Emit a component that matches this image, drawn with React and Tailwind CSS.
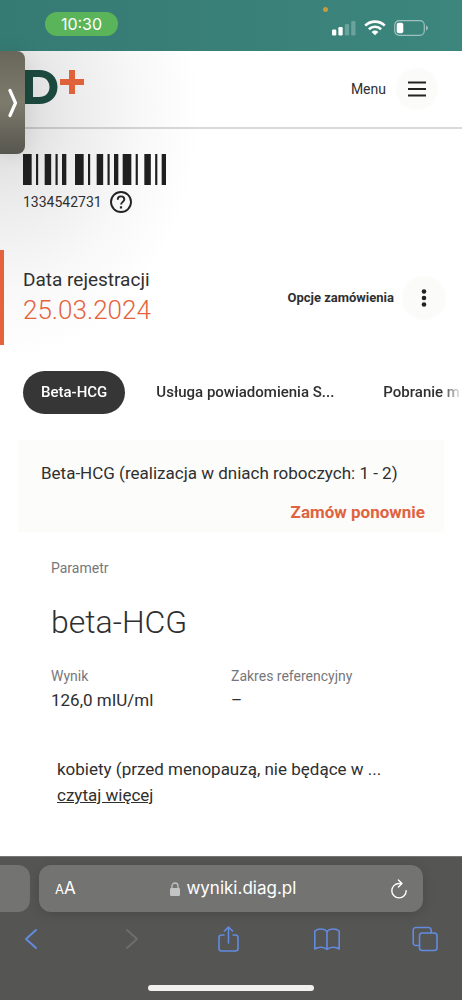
import { useState } from "react";
import clsx from "clsx";

/* ======================================================
   LAB RESULTS - order details inside a mobile browser
====================================================== */

// [offset, width] of every bar, in modules
const BARS = [
  [0, 4], [6, 1], [10, 3], [15, 1], [18, 2], [24, 4], [30, 1], [34, 3],
  [39, 1], [42, 2], [46, 4], [52, 1], [56, 3], [61, 1], [64, 2],
];

const TABS = ["Beta-HCG", "Usługa powiadomienia S...", "Pobranie m"];

export default function App() {
  return (
    <div className="relative flex min-h-screen flex-col overflow-hidden bg-white font-['Roboto','Noto_Sans',sans-serif] text-[#2f2f30]">
      <StatusBar />

      <div className="flex flex-1 flex-col bg-[radial-gradient(ellipse_200px_250px_at_0px_60px,#d6d6d6,#ebebeb_35%,#f8f8f8_70%,#ffffff)]">
        <Header />
        <main className="flex-1">
          <OrderCode />
          <OrderSummary />
          <TestTabs />
          <OrderItem />
          <Result />
        </main>
      </div>

      <BrowserBar />
      <DrawerHandle />
    </div>
  );
}

/* ================= STATUS BAR ================= */

function StatusBar() {
  return (
    <div className="relative flex h-[51px] items-center justify-between bg-linear-to-r from-[#367a74] to-[#3c867d] pr-[34px] pl-[45px]">
      <span className="mb-1 flex h-6 w-[73px] items-center justify-center rounded-full bg-[#5ab55a] font-['Inter',sans-serif] text-base text-white">
        10:30
      </span>
      <span className="absolute top-[7px] left-[70%] size-[5px] rounded-full bg-[#c79a3e]" />
      <div className="mt-1 flex items-center gap-2 text-white">
        <svg width="24" height="16" viewBox="0 0 24 16" fill="currentColor">
          <rect x="0" y="9.500" width="4.300" height="6" rx="1.200" />
          <rect x="6.400" y="7" width="4.300" height="8.500" rx="1.200" />
          <rect x="12.800" y="4" width="4.300" height="11.500" rx="1.200" opacity="0.25" />
          <rect x="19.200" y="1" width="4.300" height="14.500" rx="1.200" opacity="0.25" />
        </svg>
        <svg width="22" height="16" viewBox="0 0 22 16" fill="none" stroke="currentColor" strokeWidth="2.600">
          <path d="M1.200 5.600a14 14 0 0 1 19.600 0" />
          <path d="M4.900 9.200a8.700 8.700 0 0 1 12.200 0" />
          <path d="M11 15.300 7.600 11.900a4.900 4.900 0 0 1 6.800 0z" fill="currentColor" stroke="none" />
        </svg>
        <svg width="34" height="16" viewBox="0 0 34 16" fill="none">
          <rect x="0.700" y="0.700" width="29.600" height="14.600" rx="4.500" stroke="#fff" strokeOpacity="0.5" strokeWidth="1.200" />
          <rect x="2.700" y="2.700" width="6.600" height="10.600" rx="2" fill="#fff" />
          <path d="M32 5.500v5c1.200-.5 1.900-1.400 1.900-2.500S33.200 6 32 5.500z" fill="#fff" fillOpacity="0.5" />
        </svg>
      </div>
    </div>
  );
}

/* ================= HEADER ================= */

function Header() {
  return (
    <header className="flex h-[78px] items-center justify-between border-b-2 border-black/15 pr-6 pl-[23px]">
      <a href="#" aria-label="Diagnostyka" className="mb-1">
        <svg width="62" height="36" viewBox="0 0 62 36">
          <path
            fill="#1c483e"
            fillRule="evenodd"
            d="M2 1h14c11 0 18.500 7 18.500 17S27 35 16 35H2zM10 8v20h6c6.500 0 10.500-4 10.500-10S22.500 8 16 8z"
          />
          <path fill="#e0623b" d="M46 1h6v9h9v6h-9v9h-6v-9h-9v-6h9z" />
        </svg>
      </a>
      <button className="flex items-center gap-2.5 text-sm">
        Menu
        <span className="flex size-[42px] items-center justify-center rounded-full bg-[#fbfbf9]">
          <svg width="18" height="16" viewBox="0 0 18 16" stroke="#232323" strokeWidth="2">
            <path d="M0 1.500h18M0 8h18M0 14.500h18" />
          </svg>
        </span>
      </button>
    </header>
  );
}

/* ================= ORDER ================= */

function OrderCode() {
  return (
    <section className="px-[23px] pt-[25px]">
      <svg width="143" height="31" viewBox="0 0 66 31" preserveAspectRatio="none" fill="#1f1f20">
        {BARS.map(([x, width]) => (
          <rect key={x} x={x} width={width} height="31" />
        ))}
      </svg>
      <div className="mt-[5px] flex items-center gap-2 text-sm leading-6">
        1334542731
        <button aria-label="Pomoc">
          <svg width="22" height="22" viewBox="0 0 22 22" fill="none" stroke="#232323" strokeWidth="1.900">
            <circle cx="11" cy="11" r="10" />
            <path d="M7.700 8.700C7.700 6.700 9.100 5.400 11 5.400s3.300 1.200 3.300 3c0 2.400-3.200 2.600-3.200 5.200" />
            <path d="M11 15.300v2.200" strokeWidth="2.200" />
          </svg>
        </button>
      </div>
    </section>
  );
}

function OrderSummary() {
  return (
    <section className="mt-9 flex h-[95px] items-center justify-between border-l-4 border-[#e4633c] pr-4 pl-[19px]">
      <div className="pb-1">
        <p className="text-[19px] leading-7">Data rejestracji</p>
        <p className="text-[26px] leading-8 font-light text-[#e4633c]">25.03.2024</p>
      </div>
      <button className="flex items-center gap-2 text-[13px] font-bold">
        Opcje zamówienia
        <span className="flex size-11 items-center justify-center rounded-full bg-[#fbfbf9]">
          <svg width="6" height="18" viewBox="0 0 6 18" fill="#232323">
            <circle cx="3" cy="2.500" r="2.300" />
            <circle cx="3" cy="9" r="2.300" />
            <circle cx="3" cy="15.500" r="2.300" />
          </svg>
        </span>
      </button>
    </section>
  );
}

function TestTabs() {
  const [active, setActive] = useState(0);

  return (
    <nav className="mt-[26px] flex gap-[13px] overflow-hidden mask-r-from-[calc(100%-20px)] pl-[23px]">
      {TABS.map((label, i) => (
        <button
          key={label}
          onClick={() => setActive(i)}
          className={clsx(
            "h-[43px] shrink-0 rounded-full px-[18px] text-[15px] font-medium whitespace-nowrap",
            i === active && "bg-[#363637] text-white"
          )}
        >
          {label}
        </button>
      ))}
    </nav>
  );
}

function OrderItem() {
  return (
    <section className="mx-[18px] mt-[26px] h-[92px] bg-[#fcfcfa] px-[23px] pt-[21px]">
      <h2 className="text-[17px] leading-6 whitespace-nowrap">Beta-HCG (realizacja w dniach roboczych: 1 - 2)</h2>
      <div className="mt-[15px] -mr-1 text-right">
        <a href="#" className="text-[17px] leading-6 font-bold text-[#e0633f]">
          Zamów ponownie
        </a>
      </div>
    </section>
  );
}

/* ================= RESULT ================= */

function Result() {
  return (
    <section className="px-[51px] pt-[26px] pb-11">
      <p className="text-sm leading-5 text-[#77777a]">Parametr</p>
      <h3 className="mt-6 text-[32px] leading-10 font-light">beta-HCG</h3>

      <dl className="mt-6 grid grid-cols-2">
        <div>
          <dt className="text-sm leading-5 text-[#77777a]">Wynik</dt>
          <dd className="mt-0.5 text-[17px] leading-6">126,0 mIU/ml</dd>
        </div>
        <div>
          <dt className="text-sm leading-5 text-[#77777a]">Zakres referencyjny</dt>
          <dd className="mt-0.5 text-[17px] leading-6">–</dd>
        </div>
      </dl>

      <div className="mt-11 pl-1.5 text-[17px] leading-[26px] whitespace-nowrap">
        <p>kobiety (przed menopauzą, nie będące w ...</p>
        <a href="#" className="underline">czytaj więcej</a>
      </div>
    </section>
  );
}

/* ================= BROWSER ================= */

function BrowserBar() {
  return (
    <footer className="flex flex-col border-t border-[#777] bg-[#555554] pt-2 font-['Inter',sans-serif]">
      <div className="flex gap-[9px] pr-[39px]">
        <div className="w-[30px] shrink-0 rounded-r-xl bg-[#737372]" />
        <div className="flex h-[47px] flex-1 items-center justify-between rounded-xl bg-[#737372] px-4 text-white shadow-[0_2px_12px_rgba(0,0,0,0.15)]">
          <button aria-label="Rozmiar tekstu" className="flex items-baseline text-[17px]">
            <span className="text-[13px]">A</span>A
          </button>
          <span className="flex items-center gap-1.5 text-[17px]">
            <svg width="10" height="14" viewBox="0 0 10 14" fill="#c4c4c4">
              <rect y="6" width="10" height="8" rx="1.300" />
              <path d="M2 6.500V4a3 3 0 0 1 6 0v2.500" fill="none" stroke="#c4c4c4" strokeWidth="1.300" />
            </svg>
            wyniki.diag.pl
          </span>
          <button aria-label="Odśwież">
            <svg width="16" height="20" viewBox="0 0 16 20" fill="none" stroke="#fff" strokeWidth="1.400" strokeLinecap="round" strokeLinejoin="round">
              <path d="M10.500 4.500H8A7.200 7.200 0 1 0 15.200 11.600" />
              <path d="M7.400 1l3.500 3.500-3.500 3.500" />
            </svg>
          </button>
        </div>
      </div>

      <div className="mt-[13px] flex h-7 items-center justify-between pr-6 pl-[18px] text-[#628be0]">
        <ToolButton title="Wstecz">
          <path d="M18 4 8 13l10 9" strokeWidth="1.900" />
        </ToolButton>
        <ToolButton title="Dalej" disabled>
          <path d="M10 4l10 9-10 9" strokeWidth="1.900" />
        </ToolButton>
        <ToolButton title="Udostępnij">
          <path d="M9 9H6.500A2.500 2.500 0 0 0 4 11.500v11A2.500 2.500 0 0 0 6.500 25h14a2.500 2.500 0 0 0 2.500-2.500v-11A2.500 2.500 0 0 0 20.500 9H18" />
          <path d="M13.500 17V1M9.500 5l4-4 4 4" />
        </ToolButton>
        <ToolButton title="Zakładki">
          <path d="M13 5.500C10.500 2.300 4 2.300 .8 5v18c3.200-2.500 9.500-2.500 12.200.5 2.700-3 9-3 12.200-.5V5C22 2.300 15.500 2.300 13 5.500zM13 5.500v18" />
        </ToolButton>
        <ToolButton title="Karty">
          <rect x="7.500" y="7" width="17.500" height="17.500" rx="2.800" />
          <path d="M7.500 19.500H4A2.700 2.700 0 0 1 1.200 16.800V4.200A2.700 2.700 0 0 1 4 1.500h12.500A2.700 2.700 0 0 1 19.200 4.200V7" />
        </ToolButton>
      </div>

      <div className="mt-8 mb-[9px] h-1.5 w-[166px] self-center rounded-full bg-[#f1f0ee]" />
    </footer>
  );
}

function ToolButton({ title, disabled, children }) {
  return (
    <button title={title} disabled={disabled} className="disabled:text-[#6e6e6e]">
      <svg
        width="26"
        height="26"
        viewBox="0 0 26 26"
        fill="none"
        stroke="currentColor"
        strokeWidth="1.600"
        strokeLinecap="round"
        strokeLinejoin="round"
      >
        {children}
      </svg>
    </button>
  );
}

// floats over the page at the left edge
function DrawerHandle() {
  return (
    <button
      aria-label="Pokaż"
      className="absolute top-[51px] left-0 flex h-[103px] w-[25px] items-center justify-center rounded-r-lg bg-linear-to-b from-[#69675a] via-[#7d7b6c] to-[#57564f] shadow-[0_0_20px_rgba(0,0,0,0.08)]"
    >
      <svg width="10" height="30" viewBox="0 0 10 30" fill="none" stroke="#fff" strokeWidth="3.200" strokeLinecap="round" strokeLinejoin="round">
        <path d="M2 2.500 7.500 15 2 27.500" />
      </svg>
    </button>
  );
}
